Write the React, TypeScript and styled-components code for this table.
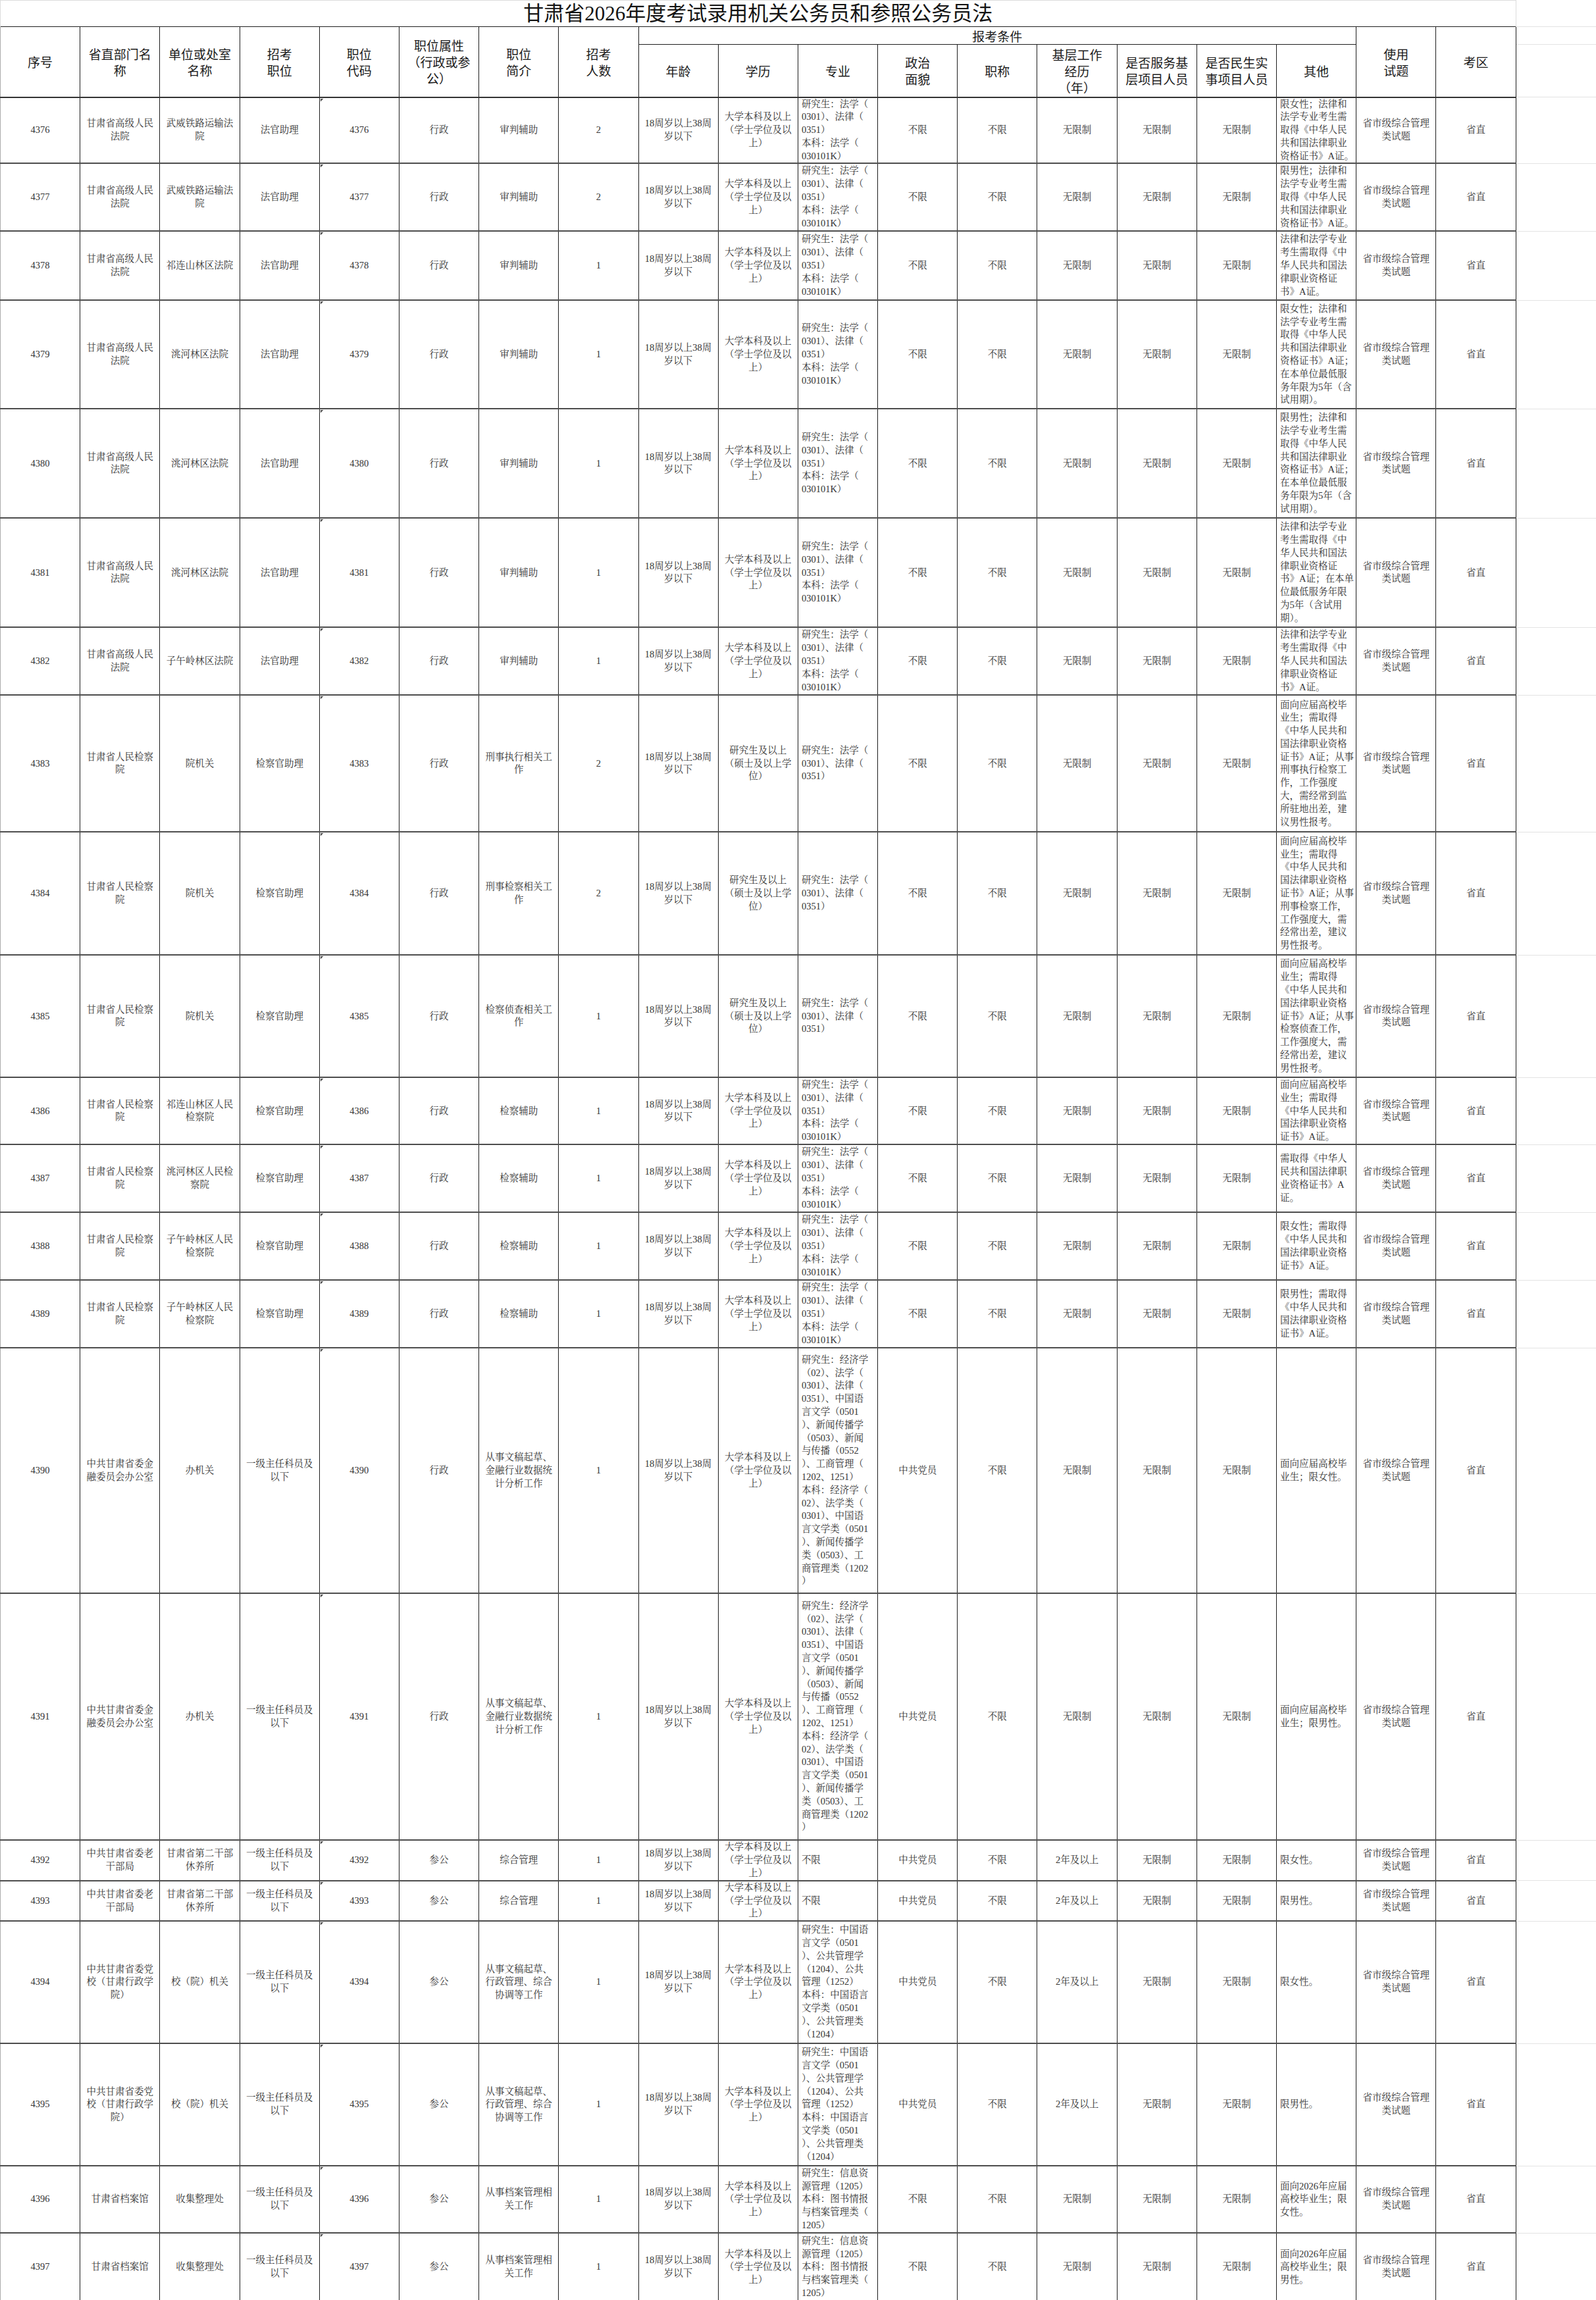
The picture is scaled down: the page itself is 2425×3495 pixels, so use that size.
import React from 'react';
import styled, { createGlobalStyle } from 'styled-components';

const GlobalStyle = createGlobalStyle`
  html, body {
    margin: 0;
    padding: 0;
    background: #fff;
  }
  body {
    width: 2425px;
    font-family: "Liberation Serif", "Noto Serif CJK SC", "Noto Sans CJK SC", serif;
  }
`;

const COL_W = 121.2;
const GHOST_W = 2425 - COL_W * 19;

const Sheet = styled.table`
  border-collapse: collapse;
  table-layout: fixed;
  width: 2425px;
`;

const Col = styled.col<{ $w: number }>`
  width: ${(p) => p.$w}px;
`;

const Row = styled.tr<{ $h: number }>`
  height: ${(p) => p.$h}px;
`;

const TitleCell = styled.td`
  padding: 0;
  text-align: center;
  vertical-align: middle;
  font-family: "Liberation Serif", "Noto Sans CJK SC", sans-serif;
  font-size: 31px;
  line-height: 36px;
  color: #141414;
  border-top: 1px solid #dcdcdc;
  border-left: 1px solid #dcdcdc;
  border-right: 1px solid #dcdcdc;
`;

const HeadCell = styled.th<{ $group?: boolean }>`
  border: 1px solid #1e1e1e;
  border-bottom: ${(p) => (p.$group ? '1px solid #1e1e1e' : '2px solid #333')};
  padding: 0 2px;
  font-family: "Noto Sans CJK SC", sans-serif;
  font-weight: 400;
  font-size: 19px;
  line-height: 25px;
  color: #1a1a1a;
  text-align: center;
  vertical-align: middle;
  white-space: pre-line;
  &:first-child {
    border-left-color: #aaa;
  }
`;

const Cell = styled.td<{ $left?: boolean }>`
  border-left: 1px solid #1e1e1e;
  border-right: 1px solid #1e1e1e;
  border-bottom: 2px solid #4d4d4d;
  padding: ${(p) => (p.$left ? '0 2px 0 5px' : '0 2px')};
  font-size: 14.5px;
  line-height: 19.8px;
  color: #333;
  text-align: ${(p) => (p.$left ? 'left' : 'center')};
  vertical-align: middle;
  white-space: pre-line;
  overflow: hidden;
  &:first-child {
    border-left-color: #aaa;
  }
`;

// the little "number stored as text" marker in the code column
const CodeCell = styled(Cell)`
  background: linear-gradient(135deg, #5a5a5a 0 3.5px, transparent 3.5px) no-repeat 1px 1px / 8px 8px;
`;

const GhostCell = styled.td`
  padding: 0;
  border-bottom: 1px solid #e3e3e3;
`;

type Post = {
  id: string;
  h: number;
  dept: string;
  unit: string;
  post: string;
  attr: string;
  intro: string;
  num: string;
  edu: string;
  major: string;
  party: string;
  title: string;
  base: string;
  other: string;
};

const AGE = '18周岁以上38周\n岁以下';
const BACHELOR = '大学本科及以上\n（学士学位及以\n上）';
const MASTER = '研究生及以上\n（硕士及以上学\n位）';
const LAW_BOTH = '研究生：法学（\n0301）、法律（\n0351）\n本科：法学（\n030101K）';
const LAW_GRAD = '研究生：法学（\n0301）、法律（\n0351）';
const ECON =
  '研究生：经济学\n（02）、法学（\n0301）、法律（\n0351）、中国语\n言文学（0501\n）、新闻传播学\n（0503）、新闻\n与传播（0552\n）、工商管理（\n1202、1251）\n本科：经济学（\n02）、法学类（\n0301）、中国语\n言文学类（0501\n）、新闻传播学\n类（0503）、工\n商管理类（1202\n）';
const PUBLIC =
  '研究生：中国语\n言文学（0501\n）、公共管理学\n（1204）、公共\n管理（1252）\n本科：中国语言\n文学类（0501\n）、公共管理类\n（1204）';
const ARCHIVE = '研究生：信息资\n源管理（1205）\n本科：图书情报\n与档案管理类（\n1205）';
const EXAM = '省市级综合管理\n类试题';
const AREA = '省直';

const COURT = '甘肃省高级人民\n法院';
const PROCURATE = '甘肃省人民检察\n院';
const LEVEL = '一级主任科员及\n以下';

const court = (id: string, h: number, unit: string, num: string, other: string): Post => ({
  id, h, dept: COURT, unit, post: '法官助理', attr: '行政', intro: '审判辅助', num,
  edu: BACHELOR, major: LAW_BOTH, party: '不限', title: '不限', base: '无限制', other,
});

const proc = (id: string, h: number, unit: string, intro: string, num: string, edu: string, major: string, other: string): Post => ({
  id, h, dept: PROCURATE, unit, post: '检察官助理', attr: '行政', intro, num,
  edu, major, party: '不限', title: '不限', base: '无限制', other,
});

const OTHER_A = '法律和法学专业\n考生需取得《中\n华人民共和国法\n律职业资格证\n书》A证。';
const certSex = (sex: string) => `限${sex}性；法律和\n法学专业考生需\n取得《中华人民\n共和国法律职业\n资格证书》A证。`;
const certSexTerm = (sex: string) =>
  `限${sex}性；法律和\n法学专业考生需\n取得《中华人民\n共和国法律职业\n资格证书》A证；\n在本单位最低服\n务年限为5年（含\n试用期）。`;
const procSex = (sex: string) => `限${sex}性；需取得\n《中华人民共和\n国法律职业资格\n证书》A证。`;

const rows: Post[] = [
  court('4376', 100, '武威铁路运输法\n院', '2', certSex('女')),
  court('4377', 103, '武威铁路运输法\n院', '2', certSex('男')),
  court('4378', 105, '祁连山林区法院', '1', OTHER_A),
  court('4379', 165, '洮河林区法院', '1', certSexTerm('女')),
  court('4380', 166, '洮河林区法院', '1', certSexTerm('男')),
  court(
    '4381', 166, '洮河林区法院', '1',
    '法律和法学专业\n考生需取得《中\n华人民共和国法\n律职业资格证\n书》A证；在本单\n位最低服务年限\n为5年（含试用\n期）。',
  ),
  court('4382', 103, '子午岭林区法院', '1', OTHER_A),
  proc(
    '4383', 208, '院机关', '刑事执行相关工\n作', '2', MASTER, LAW_GRAD,
    '面向应届高校毕\n业生；需取得\n《中华人民共和\n国法律职业资格\n证书》A证；从事\n刑事执行检察工\n作，工作强度\n大，需经常到监\n所驻地出差，建\n议男性报考。',
  ),
  proc(
    '4384', 187, '院机关', '刑事检察相关工\n作', '2', MASTER, LAW_GRAD,
    '面向应届高校毕\n业生；需取得\n《中华人民共和\n国法律职业资格\n证书》A证；从事\n刑事检察工作，\n工作强度大，需\n经常出差，建议\n男性报考。',
  ),
  proc(
    '4385', 186, '院机关', '检察侦查相关工\n作', '1', MASTER, LAW_GRAD,
    '面向应届高校毕\n业生；需取得\n《中华人民共和\n国法律职业资格\n证书》A证；从事\n检察侦查工作，\n工作强度大，需\n经常出差，建议\n男性报考。',
  ),
  proc(
    '4386', 102, '祁连山林区人民\n检察院', '检察辅助', '1', BACHELOR, LAW_BOTH,
    '面向应届高校毕\n业生；需取得\n《中华人民共和\n国法律职业资格\n证书》A证。',
  ),
  proc('4387', 103, '洮河林区人民检\n察院', '检察辅助', '1', BACHELOR, LAW_BOTH, '需取得《中华人\n民共和国法律职\n业资格证书》A\n证。'),
  proc('4388', 103, '子午岭林区人民\n检察院', '检察辅助', '1', BACHELOR, LAW_BOTH, procSex('女')),
  proc('4389', 103, '子午岭林区人民\n检察院', '检察辅助', '1', BACHELOR, LAW_BOTH, procSex('男')),
  ...(['女', '男'] as const).map((sex, i): Post => ({
    id: String(4390 + i), h: i === 0 ? 373 : 375,
    dept: '中共甘肃省委金\n融委员会办公室', unit: '办机关', post: LEVEL, attr: '行政',
    intro: '从事文稿起草、\n金融行业数据统\n计分析工作', num: '1', edu: BACHELOR, major: ECON,
    party: '中共党员', title: '不限', base: '无限制', other: `面向应届高校毕\n业生；限${sex}性。`,
  })),
  ...(['女', '男'] as const).map((sex, i): Post => ({
    id: String(4392 + i), h: i === 0 ? 60 : 61,
    dept: '中共甘肃省委老\n干部局', unit: '甘肃省第二干部\n休养所', post: LEVEL, attr: '参公',
    intro: '综合管理', num: '1', edu: BACHELOR, major: '不限',
    party: '中共党员', title: '不限', base: '2年及以上', other: `限${sex}性。`,
  })),
  ...(['女', '男'] as const).map((sex, i): Post => ({
    id: String(4394 + i), h: 186,
    dept: '中共甘肃省委党\n校（甘肃行政学\n院）', unit: '校（院）机关', post: LEVEL, attr: '参公',
    intro: '从事文稿起草、\n行政管理、综合\n协调等工作', num: '1', edu: BACHELOR, major: PUBLIC,
    party: '中共党员', title: '不限', base: '2年及以上', other: `限${sex}性。`,
  })),
  ...(['女', '男'] as const).map((sex, i): Post => ({
    id: String(4396 + i), h: i === 0 ? 102 : 104,
    dept: '甘肃省档案馆', unit: '收集整理处', post: LEVEL, attr: '参公',
    intro: '从事档案管理相\n关工作', num: '1', edu: BACHELOR, major: ARCHIVE,
    party: '不限', title: '不限', base: '无限制', other: `面向2026年应届\n高校毕业生；限\n${sex}性。`,
  })),
];

const leadHeads = ['序号', '省直部门名\n称', '单位或处室\n名称', '招考\n职位', '职位\n代码', '职位属性\n（行政或参\n公）', '职位\n简介', '招考\n人数'];
const condHeads = ['年龄', '学历', '专业', '政治\n面貌', '职称', '基层工作\n经历\n（年）', '是否服务基\n层项目人员', '是否民生实\n事项目人员', '其他'];

export default function App() {
  return (
    <>
      <GlobalStyle />
      <Sheet>
        <colgroup>
          {Array.from({ length: 19 }, (_, i) => (
            <Col key={i} $w={COL_W} />
          ))}
          <Col $w={GHOST_W} />
        </colgroup>
        <tbody>
          <Row $h={40}>
            <TitleCell colSpan={19}>甘肃省2026年度考试录用机关公务员和参照公务员法</TitleCell>
            <GhostCell />
          </Row>
          <Row $h={27}>
            {leadHeads.map((t) => (
              <HeadCell key={t} rowSpan={2}>{t}</HeadCell>
            ))}
            <HeadCell colSpan={9} $group>报考条件</HeadCell>
            <HeadCell rowSpan={2}>{'使用\n试题'}</HeadCell>
            <HeadCell rowSpan={2}>考区</HeadCell>
            <GhostCell />
          </Row>
          <Row $h={80}>
            {condHeads.map((t) => (
              <HeadCell key={t}>{t}</HeadCell>
            ))}
            <GhostCell />
          </Row>
          {rows.map((r) => (
            <Row key={r.id} $h={r.h}>
              <Cell>{r.id}</Cell>
              <Cell>{r.dept}</Cell>
              <Cell>{r.unit}</Cell>
              <Cell>{r.post}</Cell>
              <CodeCell>{r.id}</CodeCell>
              <Cell>{r.attr}</Cell>
              <Cell>{r.intro}</Cell>
              <Cell>{r.num}</Cell>
              <Cell>{AGE}</Cell>
              <Cell>{r.edu}</Cell>
              <Cell $left>{r.major}</Cell>
              <Cell>{r.party}</Cell>
              <Cell>{r.title}</Cell>
              <Cell>{r.base}</Cell>
              <Cell>无限制</Cell>
              <Cell>无限制</Cell>
              <Cell $left>{r.other}</Cell>
              <Cell>{EXAM}</Cell>
              <Cell>{AREA}</Cell>
              <GhostCell />
            </Row>
          ))}
        </tbody>
      </Sheet>
    </>
  );
}
